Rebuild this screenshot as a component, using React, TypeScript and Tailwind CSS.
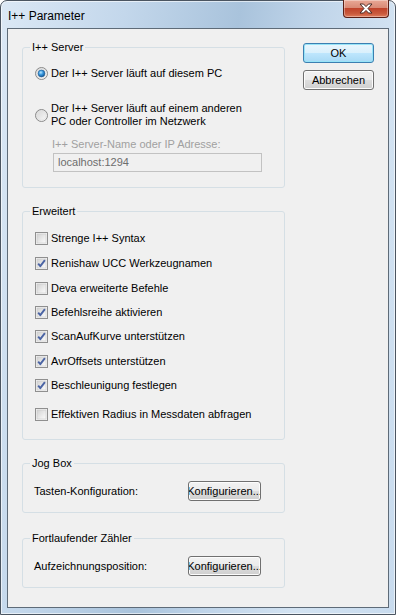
import type { ReactNode } from 'react';

const font = { fontFamily: '"Liberation Sans", Arial, sans-serif' };

function Radio({ checked }: { checked?: boolean }) {
  return (
    <svg width="13" height="13" viewBox="0 0 13 13" className="shrink-0">
      <defs>
        <linearGradient id={checked ? 'rg1' : 'rg0'} x1="0" y1="0" x2="1" y2="1">
          <stop offset="0" stopColor="#d4d4d4" />
          <stop offset="1" stopColor="#fbfbfb" />
        </linearGradient>
        <radialGradient id="dot" cx="0.4" cy="0.35" r="0.7">
          <stop offset="0" stopColor="#b9e6ff" />
          <stop offset="0.45" stopColor="#3a9ae0" />
          <stop offset="1" stopColor="#0f4f8c" />
        </radialGradient>
      </defs>
      <circle cx="6.5" cy="6.5" r="6" fill={`url(#${checked ? 'rg1' : 'rg0'})`} stroke="#8a8a8a" />
      <circle cx="6.5" cy="6.5" r="4.6" fill="none" stroke="#e2e2e2" strokeWidth="0.8" />
      {checked && <circle cx="6.5" cy="6.5" r="3.4" fill="url(#dot)" stroke="#1c5a94" strokeWidth="0.6" />}
    </svg>
  );
}

function Check({ checked }: { checked?: boolean }) {
  return (
    <svg width="13" height="13" viewBox="0 0 13 13" className="shrink-0">
      <defs>
        <linearGradient id="cb" x1="0" y1="0" x2="1" y2="1">
          <stop offset="0" stopColor="#d2d2d2" />
          <stop offset="1" stopColor="#fcfcfc" />
        </linearGradient>
      </defs>
      <rect x="0.5" y="0.5" width="12" height="12" fill="#f4f4f4" stroke="#8f8f8f" />
      <rect x="2" y="2" width="9" height="9" fill="url(#cb)" stroke="#c8c8c8" strokeWidth="0.6" />
      {checked && (
        <path d="M3.2 6.6 L5.3 9.2 L9.9 3.2" fill="none" stroke="#4b64a4" strokeWidth="1.9" strokeLinejoin="round" />
      )}
    </svg>
  );
}

function Group({ title, children, className }: { title: string; children: ReactNode; className?: string }) {
  return (
    <fieldset className={`border border-[#d5dfe5] rounded-[3px] pl-[11px] ${className ?? ''}`}>
      <legend className="-ml-[4px] px-[2px] leading-[14px] text-[11px] text-black">{title}</legend>
      {children}
    </fieldset>
  );
}

function CheckRow({ label, checked, mt }: { label: string; checked?: boolean; mt: string }) {
  return (
    <div className={`flex items-center gap-[3px] h-[13px] pl-[1px] ${mt}`}>
      <Check checked={checked} />
      <span className="text-[11px] leading-[13px] whitespace-nowrap">{label}</span>
    </div>
  );
}

function DlgButton({ children, focused, className }: { children: ReactNode; focused?: boolean; className?: string }) {
  return (
    <div
      className={`flex items-center justify-center overflow-hidden whitespace-nowrap rounded-[3px] border text-[11px] leading-[13px] text-black ${
        focused
          ? 'border-[#3c7fb1] bg-[linear-gradient(180deg,#eaf6fd_0%,#d9f0fc_50%,#bee6fd_51%,#a7d9f5_100%)] shadow-[inset_0_0_0_1px_#98e4f7]'
          : 'border-[#707070] bg-[linear-gradient(180deg,#f2f2f2_0%,#ebebeb_50%,#dddddd_51%,#cfcfcf_100%)] shadow-[inset_0_0_0_1px_#fcfcfc]'
      } ${className ?? ''}`}
    >
      {children}
    </div>
  );
}

export default function App() {
  return (
    <div className="w-[396px] h-[615px] bg-white" style={font}>
      <div className="w-[396px] h-[615px] flex flex-col rounded-t-[7px] border border-[#4b5561] bg-[linear-gradient(100deg,#dbe8f5_0%,#c3d7eb_25%,#a9c3dc_48%,#bfd4e9_62%,#d3e3f2_80%,#c8dbee_100%)] px-[6px] pb-[6px] shadow-[inset_0_0_0_1px_rgba(255,255,255,0.6)]">
        {/* title bar */}
        <div className="h-[27px] flex items-start justify-between shrink-0">
          <span className="mt-[8px] ml-[1px] text-[12px] leading-[14px] text-black">I++ Parameter</span>
          <div className="w-[46px] h-[18px] -mt-px flex items-center justify-center rounded-b-[4px] border border-t-0 border-[#5a1f16] bg-[linear-gradient(180deg,#e9a896_0%,#d98a76_45%,#c0432b_50%,#c95a3d_80%,#e07c5c_100%)] shadow-[inset_0_0_0_1px_rgba(255,255,255,0.35)]">
            <svg width="14" height="11" viewBox="0 0 14 11">
              <path
                d="M1 1 H4.5 L7 3.6 L9.5 1 H13 L9 5.5 L13 10 H9.5 L7 7.4 L4.5 10 H1 L5 5.5 Z"
                fill="#fff"
                stroke="#4a2a25"
                strokeWidth="1"
                strokeLinejoin="round"
              />
            </svg>
          </div>
        </div>
        {/* client area */}
        <div className="flex-1 flex border border-[#5e6b78] bg-[#f0f0f0] text-black">
          <div className="w-[263px] ml-[14px] pt-[11px] flex flex-col">
            <Group title="I++ Server" className="pb-[15px]">
              <div className="flex items-center gap-[3px] h-[13px] mt-[13px] pl-[1px]">
                <Radio checked />
                <span className="text-[11px] leading-[13px] whitespace-nowrap">Der I++ Server läuft auf diesem PC</span>
              </div>
              <div className="flex items-center gap-[3px] mt-[22px] pl-[1px]">
                <Radio />
                <span className="text-[11px] leading-[13px]">
                  Der I++ Server läuft auf einem anderen
                  <br />
                  PC oder Controller im Netzwerk
                </span>
              </div>
              <div className="ml-[18px] mt-[10px] text-[11px] leading-[13px] text-[#a0a0a0]">I++ Server-Name oder IP Adresse:</div>
              <div className="ml-[19px] mt-[2px] w-[209px] h-[19px] border border-[#c2c2c2] bg-[#f0f0f0] flex items-center pl-[4px] text-[11px] text-[#6d6d6d]">
                localhost:1294
              </div>
            </Group>

            <Group title="Erweitert" className="mt-[16px] pb-[18px]">
              <CheckRow label="Strenge I++ Syntax" mt="mt-[14px]" />
              <CheckRow label="Renishaw UCC Werkzeugnamen" checked mt="mt-[12px]" />
              <CheckRow label="Deva erweiterte Befehle" mt="mt-[12px]" />
              <CheckRow label="Befehlsreihe aktivieren" checked mt="mt-[11px]" />
              <CheckRow label="ScanAufKurve unterstützen" checked mt="mt-[11px]" />
              <CheckRow label="AvrOffsets unterstützen" checked mt="mt-[12px]" />
              <CheckRow label="Beschleunigung festlegen" checked mt="mt-[11px]" />
              <CheckRow label="Effektiven Radius in Messdaten abfragen" mt="mt-[16px]" />
            </Group>

            <Group title="Jog Box" className="mt-[16px] pb-[11px]">
              <div className="flex items-center mt-[11px]">
                <span className="w-[154px] text-[11px] leading-[13px]">Tasten-Konfiguration:</span>
                <DlgButton className="w-[73px] h-[20px]">Konfigurieren...</DlgButton>
              </div>
            </Group>

            <Group title="Fortlaufender Zähler" className="mt-[18px] pb-[11px]">
              <div className="flex items-center mt-[11px]">
                <span className="w-[154px] text-[11px] leading-[13px]">Aufzeichnungsposition:</span>
                <DlgButton className="w-[73px] h-[20px]">Konfigurieren...</DlgButton>
              </div>
            </Group>
          </div>

          <div className="ml-[18px] pt-[14px] flex flex-col">
            <DlgButton focused className="w-[71px] h-[20px]">OK</DlgButton>
            <DlgButton className="w-[71px] h-[20px] mt-[7px]">Abbrechen</DlgButton>
          </div>
        </div>
      </div>
    </div>
  );
}
